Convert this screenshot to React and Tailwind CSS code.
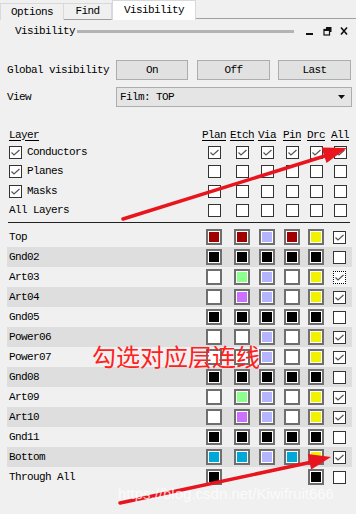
import React from "react";

const FILL = {
  r: "bg-[#a00000]",
  k: "bg-[#000000]",
  w: "bg-[#ffffff]",
  p: "bg-[#b4b4ff]",
  y: "bg-[#f2f200]",
  g: "bg-[#8cff8c]",
  m: "bg-[#cc70ff]",
  c: "bg-[#00a8d8]",
};

const K5 = ["k", "k", "k", "k", "k"];
const ROWS = [
  ["Top", ["r", "r", "p", "r", "y"], 1],
  ["Gnd02", K5, 0],
  ["Art03", ["w", "g", "p", "w", "y"], 2],
  ["Art04", ["w", "m", "p", "w", "y"], 1],
  ["Gnd05", K5, 0],
  ["Power06", ["w", "w", "p", "w", "y"], 1],
  ["Power07", ["w", "w", "p", "w", "y"], 1],
  ["Gnd08", K5, 0],
  ["Art09", ["w", "g", "p", "w", "y"], 1],
  ["Art10", ["w", "m", "p", "w", "y"], 1],
  ["Gnd11", K5, 0],
  ["Bottom", ["c", "c", "p", "c", "y"], 1],
  ["Through All", ["k", null, null, null, "k"], 0],
];

function Check({ checked, focus }) {
  return (
    <div
      className={
        focus
          ? "w-[13px] h-[13px] bg-white border border-dotted border-black flex items-center justify-center"
          : "w-[13px] h-[13px] bg-white border border-[#333333] flex items-center justify-center"
      }
    >
      {checked ? (
        <svg width="11" height="11" viewBox="0 0 11 11">
          <path d="M1.5 5.5 L4 8 L9.5 3" fill="none" stroke="#555555" strokeWidth="1.2" />
        </svg>
      ) : null}
    </div>
  );
}

function Swatch({ c }) {
  if (!c) return null;
  return (
    <div className="w-4 h-4 border-2 border-[#6e6e6e] bg-white p-px flex">
      <div className={"flex-1 " + FILL[c]} />
    </div>
  );
}

const GRID = "grid grid-cols-[200px_28px_28px_22px_28px_20px_28px] items-center";
const LGRID = "grid grid-cols-[193px_28px_28px_22px_28px_20px_26px] items-center";

function Cell({ children }) {
  return <div className="flex justify-center items-center">{children}</div>;
}

export default function App() {
  const btn =
    "h-[20px] border border-[#adadad] bg-[#e1e1e1] flex items-center justify-center";
  return (
    <div
      className="relative w-[356px] h-[514px] overflow-hidden bg-[#f0f0f0] text-black text-[11px] tracking-[-0.6px] leading-none flex flex-col"
      style={{ fontFamily: '"Liberation Mono", monospace' }}
    >
      {/* tabs */}
      <div className="h-[20px] flex items-end shrink-0">
        <div className="w-[64px] h-[17px] border border-b-0 border-[#d9d9d9] bg-[#f0f0f0] flex items-center justify-center border-b border-b-[#a0a0a0]">
          Options
        </div>
        <div className="w-[48px] h-[17px] border border-l-0 border-[#d9d9d9] bg-[#f0f0f0] flex items-center justify-center border-b-[#a0a0a0]">
          Find
        </div>
        <div className="w-[84px] h-[20px] bg-white border-x border-t border-[#d9d9d9] flex items-center justify-center">
          Visibility
        </div>
        <div className="flex-1 h-px bg-[#a0a0a0] mb-px" />
      </div>

      {/* title */}
      <div className="h-[22px] flex items-center shrink-0">
        <span className="ml-[15px]">Visibility</span>
        <div className="ml-[2px] w-[217px] h-[3px] bg-[#b4b4b4]" />
        <svg className="ml-[10px]" width="50" height="14" viewBox="0 0 50 14">
          <rect x="2" y="9" width="7" height="2" fill="#111" />
          <rect x="22" y="3" width="5" height="2" fill="#111" />
          <rect x="26" y="3" width="1.5" height="5" fill="#111" />
          <rect x="20" y="5.5" width="5.5" height="5.5" fill="none" stroke="#111" strokeWidth="1.2" />
          <rect x="20" y="5" width="6" height="2" fill="#111" />
          <path d="M37 3.5 L43 10.5 M43 3.5 L37 10.5" stroke="#111" strokeWidth="1.6" />
        </svg>
      </div>

      {/* global visibility */}
      <div className="mt-[18px] h-[20px] flex items-center shrink-0">
        <span className="ml-[7px] w-[109px]">Global visibility</span>
        <div className={btn + " w-[72px]"}>On</div>
        <div className={btn + " w-[73px] ml-[9px]"}>Off</div>
        <div className={btn + " w-[73px] ml-[8px]"}>Last</div>
      </div>

      {/* view */}
      <div className="mt-[7px] h-[20px] flex items-center shrink-0">
        <span className="ml-[7px] w-[109px]">View</span>
        <div className="w-[236px] h-[20px] border border-[#adadad] bg-[#e5e5e5] flex items-center pl-[3px] pr-[6px]">
          <span className="flex-1">Film: TOP</span>
          <svg width="7" height="4" viewBox="0 0 7 4">
            <path d="M0 0 H7 L3.5 4 Z" fill="#111" />
          </svg>
        </div>
      </div>

      {/* header */}
      <div className={GRID + " mt-[21px] h-[14px] shrink-0"}>
        <span className="ml-[9px] underline underline-offset-2">Layer</span>
        {["Plan", "Etch", "Via", "Pin", "Drc", "All"].map((h) => (
          <Cell key={h}>
            <span className="underline underline-offset-2">{h}</span>
          </Cell>
        ))}
      </div>

      {[
        ["Conductors", true, "h-[20px]"],
        ["Planes", true, "h-[19px]"],
        ["Masks", true, "h-[20px]"],
        ["All Layers", null, "h-[19px]"],
      ].map(([label, lc, h], i) => (
        <div key={label} className={GRID + " shrink-0 " + h}>
          <div className="flex items-center ml-[9px]">
            {lc !== null ? (
              <>
                <Check checked={lc} />
                <span className="ml-[5px]">{label}</span>
              </>
            ) : (
              <span>{label}</span>
            )}
          </div>
          {[0, 1, 2, 3, 4, 5].map((j) => (
            <Cell key={j}>
              <Check checked={i === 0} />
            </Cell>
          ))}
        </div>
      ))}

      <div className="mt-[2px] ml-[8px] w-[342px] h-px bg-[#222222] shrink-0" />

      <div className="mt-[4px] flex flex-col shrink-0">
        {ROWS.map(([name, cols, chk], i) => (
          <div
            key={name}
            className={
              LGRID +
              " ml-[7px] w-[345px] h-[20px] " +
              (i % 2 === 1 ? "bg-[#dedede]" : "bg-[#f0f0f0]")
            }
          >
            <span className="ml-[2px]">{name}</span>
            {cols.map((c, j) => (
              <Cell key={j}>
                <Swatch c={c} />
              </Cell>
            ))}
            <Cell>
              <Check checked={chk > 0} focus={chk === 2} />
            </Cell>
          </div>
        ))}
      </div>

      {/* annotation overlay */}
      <svg
        className="absolute inset-0 pointer-events-none"
        width="356"
        height="514"
        viewBox="0 0 356 514"
      >
        <line x1="123" y1="219" x2="328" y2="155" stroke="#e8141e" strokeWidth="3.5" strokeLinecap="round" />
        <polygon points="347,148 321.5,147.5 326.5,163" fill="#e8141e" />
        <line x1="120" y1="503" x2="312" y2="462" stroke="#e8141e" strokeWidth="3.5" strokeLinecap="round" />
        <polygon points="331,457 307.8,453.9 311.2,469.5" fill="#e8141e" />
      </svg>
      <div
        className="absolute left-[92px] top-[344px] text-[24px] leading-none tracking-normal text-[#ff2020]"
        style={{ fontFamily: '"Noto Sans CJK SC", sans-serif' }}
      >
        勾选对应层连线
      </div>
      <div
        className="absolute left-[118px] top-[486px] text-[15px] leading-none tracking-normal text-white/75"
        style={{ fontFamily: '"Liberation Sans", Arial, sans-serif' }}
      >
        https://blog.csdn.net/Kiwifruit666
      </div>
    </div>
  );
}
